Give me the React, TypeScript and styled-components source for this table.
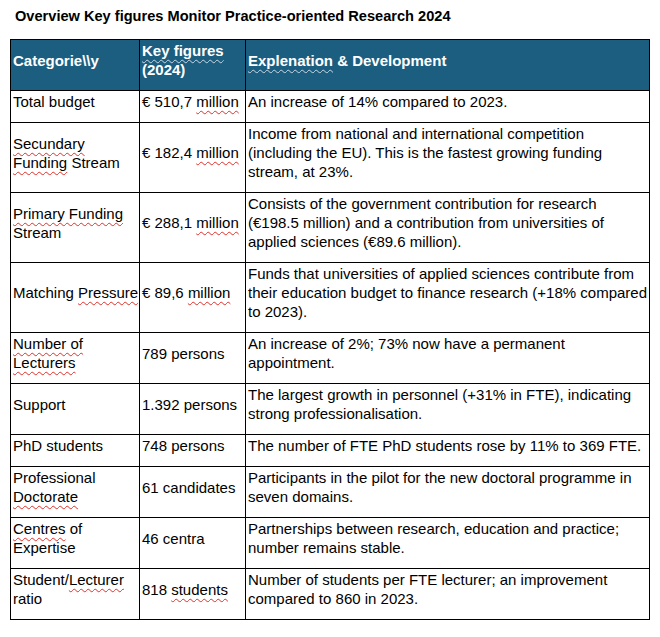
import { ReactNode } from 'react'
import styled, { createGlobalStyle } from 'styled-components'

const GlobalStyle = createGlobalStyle`
  body {
    margin: 0;
    background: #ffffff;
    font-family: 'Liberation Sans', Arial, sans-serif;
    color: #000000;
  }
`

const Page = styled.main`
  padding: 6px 10px 10px 10px;
  width: 640px;
`

const Title = styled.h1`
  margin: 0 0 13px 5px;
  font-size: 14.6px;
  line-height: 20px;
  font-weight: 700;
`

const Table = styled.table`
  width: 640px;
  border-collapse: collapse;
  table-layout: fixed;
  font-size: 15px;
  line-height: 19px;
`

const HeadCell = styled.th`
  background: #1b5e7f;
  color: #ffffff;
  font-weight: 700;
  text-align: left;
  vertical-align: middle;
  padding: 1px 2px 0 2px;
  border: 1px solid #000000;
`

const Cell = styled.td`
  text-align: left;
  vertical-align: middle;
  padding: 1px 2px 0 2px;
  border: 1px solid #000000;
  white-space: nowrap;
`

const Para = styled.p`
  margin: 0 0 11px 0;
`

const Misspelt = styled.span<{ $tone?: 'red' | 'light' }>`
  text-decoration-line: underline;
  text-decoration-style: wavy;
  text-decoration-color: ${(p) => (p.$tone === 'light' ? '#c9d8e4' : '#e0302a')};
  text-decoration-thickness: 1px;
  text-underline-offset: 3px;
  text-decoration-skip-ink: none;
`

interface Row {
  category: ReactNode
  figure: ReactNode
  lines: string[]
}

const M = ({ children }: { children: ReactNode }) => <Misspelt>{children}</Misspelt>

const rows: Row[] = [
  {
    category: 'Total budget',
    figure: <>€ 510,7 <M>million</M></>,
    lines: ['An increase of 14% compared to 2023.'],
  },
  {
    category: <><M>Secundary</M><br /><M>Funding</M> Stream</>,
    figure: <>€ 182,4 <M>million</M></>,
    lines: [
      'Income from national and international competition',
      '(including the EU). This is the fastest growing funding',
      'stream, at 23%.',
    ],
  },
  {
    category: <><M>Primary Funding</M><br />Stream</>,
    figure: <>€ 288,1 <M>million</M></>,
    lines: [
      'Consists of the government contribution for research',
      '(€198.5 million) and a contribution from universities of',
      'applied sciences (€89.6 million).',
    ],
  },
  {
    category: <>Matching <M>Pressure</M></>,
    figure: <>€ 89,6 <M>million</M></>,
    lines: [
      'Funds that universities of applied sciences contribute from',
      'their education budget to finance research (+18% compared',
      'to 2023).',
    ],
  },
  {
    category: <><M>Number of</M><br /><M>Lecturers</M></>,
    figure: '789 persons',
    lines: ['An increase of 2%; 73% now have a permanent', 'appointment.'],
  },
  {
    category: 'Support',
    figure: '1.392 persons',
    lines: [
      'The largest growth in personnel (+31% in FTE), indicating',
      'strong professionalisation.',
    ],
  },
  {
    category: 'PhD students',
    figure: '748 persons',
    lines: ['The number of FTE PhD students rose by 11% to 369 FTE.'],
  },
  {
    category: <>Professional<br /><M>Doctorate</M></>,
    figure: '61 candidates',
    lines: ['Participants in the pilot for the new doctoral programme in', 'seven domains.'],
  },
  {
    category: <><M>Centres</M> of<br />Expertise</>,
    figure: '46 centra',
    lines: ['Partnerships between research, education and practice;', 'number remains stable.'],
  },
  {
    category: <>Student/<M>Lecturer</M><br />ratio</>,
    figure: <>818 <M>students</M></>,
    lines: ['Number of students per FTE lecturer; an improvement', 'compared to 860 in 2023.'],
  },
]

function App() {
  return (
    <>
      <GlobalStyle />
      <Page>
        <Title>Overview Key figures Monitor Practice-oriented Research 2024</Title>
        <Table>
          <colgroup>
            <col style={{ width: 129 }} />
            <col style={{ width: 106 }} />
            <col />
          </colgroup>
          <thead>
            <tr>
              <HeadCell>
                <Para>Categorie\\y</Para>
              </HeadCell>
              <HeadCell>
                <Para>
                  <Misspelt $tone="light">Key figures</Misspelt>
                  <br />
                  (2024)
                </Para>
              </HeadCell>
              <HeadCell>
                <Para>
                  <Misspelt $tone="light">Explenation</Misspelt> &amp; Development
                </Para>
              </HeadCell>
            </tr>
          </thead>
          <tbody>
            {rows.map((row, i) => (
              <tr key={i}>
                <Cell>
                  <Para>{row.category}</Para>
                </Cell>
                <Cell>
                  <Para>{row.figure}</Para>
                </Cell>
                <Cell>
                  <Para>
                    {row.lines.map((line, j) => (
                      <span key={j}>
                        {j > 0 && <br />}
                        {line}
                      </span>
                    ))}
                  </Para>
                </Cell>
              </tr>
            ))}
          </tbody>
        </Table>
      </Page>
    </>
  )
}

export default App
